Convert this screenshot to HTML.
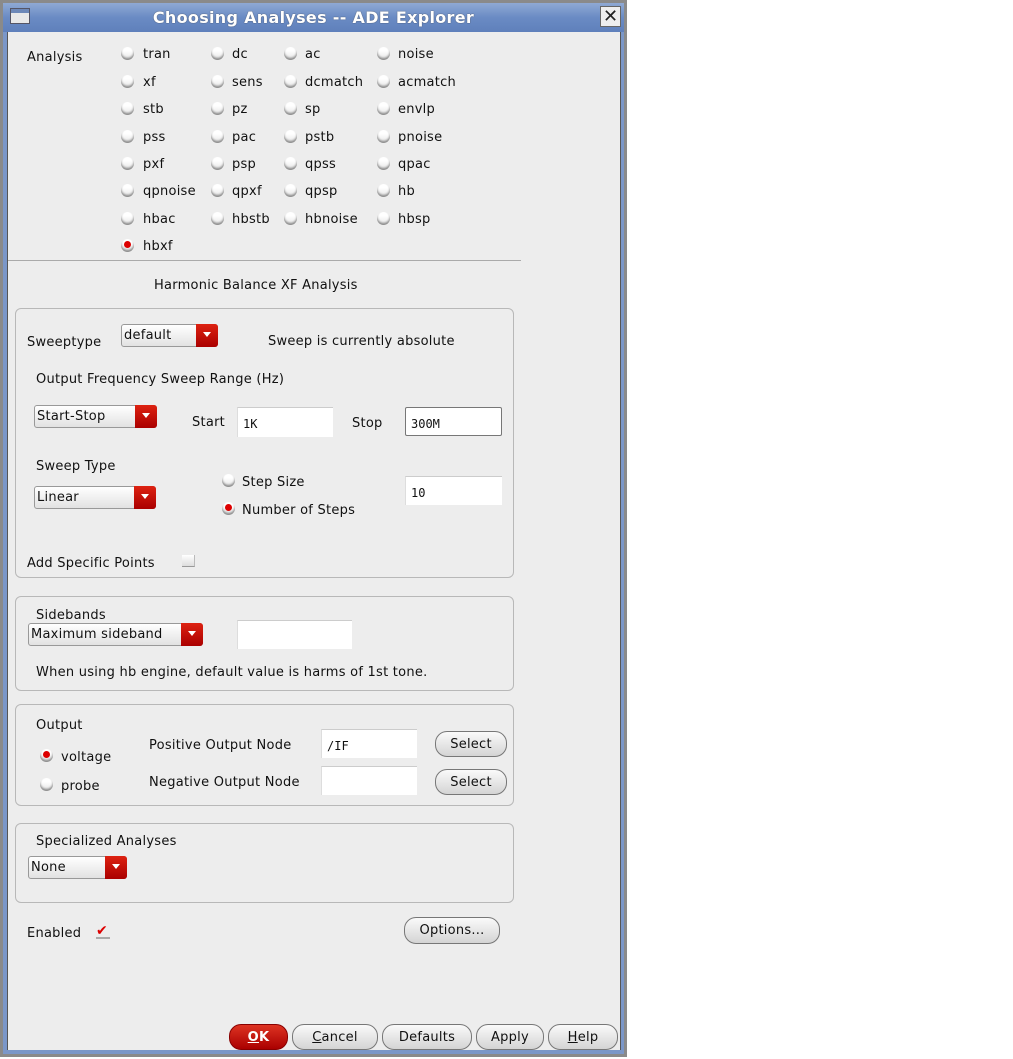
<!DOCTYPE html>
<html><head><meta charset="utf-8"><style>
*{margin:0;padding:0;box-sizing:border-box}
body{width:1013px;height:1059px;background:#fff;position:relative;overflow:hidden;font-family:"DejaVu Sans","Liberation Sans",sans-serif;font-size:13px;color:#111}
.a{position:absolute;white-space:nowrap}
.x{margin-top:2px;letter-spacing:0.25px}
#win{position:absolute;left:0;top:0;width:627px;height:1057px;background:#8a8a8a}
#title{position:absolute;left:3px;top:3px;width:621px;height:29px;background:linear-gradient(#8fa9d4,#6a8bc4 50%,#5f80bb);}
#title .t{position:absolute;left:0;right:0;top:5px;text-align:center;color:#fff;font-weight:bold;font-size:16px;text-shadow:0 0 1px #333;letter-spacing:0.3px}
#frame{position:absolute;left:3px;top:32px;width:621px;height:1022px;background:#7b97c8}
#body{position:absolute;left:7px;top:32px;width:614px;height:1018px;background:#ededed;border-left:1px solid #555;border-right:1px solid #555}
.r{position:absolute;width:13px;height:13px;border-radius:50%;background:linear-gradient(#fff 30%,#e4e4e4);box-shadow:inset 0 -2px 2px #8a8a8a}
.r.on::after{content:"";position:absolute;left:3px;top:2px;width:7px;height:7px;border-radius:50%;background:#d00}
.grp{position:absolute;left:15px;width:499px;border:1px solid #b8b8b8;border-radius:6px}
.dd{position:absolute;height:23px;border:1px solid #999;border-radius:3px;background:linear-gradient(#fff,#e2e2e2);padding:3px 0 0 2px;font-size:13px;letter-spacing:0.25px}
.dd b{position:absolute;right:-1px;top:-1px;width:22px;height:23px;background:linear-gradient(#d21,#a00);border-radius:0 3px 3px 0}
.dd b::after{content:"";position:absolute;left:7px;top:8px;border-left:4px solid transparent;border-right:4px solid transparent;border-top:5px solid #fff}
.tf{position:absolute;background:#fff;border-top:1px solid #ccc;border-left:1px solid #ddd;font-family:"DejaVu Sans Mono","Liberation Mono",monospace;font-size:12px;padding:9px 0 0 5px}
.bt{position:absolute;height:26px;border:1px solid #777;border-radius:12px;background:linear-gradient(#fafafa,#d4d4d4);text-align:center;line-height:26px;font-size:13px;letter-spacing:0.25px}
</style></head><body>
<div id="win"></div>
<div id="title"><div class="a" style="left:7px;top:5px;width:20px;height:16px;background:linear-gradient(#6d88b8 30%,#e8e8e8 30%);border:1px solid #556"></div><div class="t">Choosing Analyses -- ADE Explorer</div>
<div class="a" style="right:3px;top:3px;width:21px;height:21px;background:#eee;border:1px solid #666;font-size:18px;line-height:19px;text-align:center;color:#222">✕</div></div>
<div id="frame"></div>
<div id="body"></div>

<div class="a x" style="left:27px;top:48px">Analysis</div>
<div class="r" style="left:121px;top:47px"></div><div class="a x" style="left:143px;top:45px">tran</div>
<div class="r" style="left:211px;top:47px"></div><div class="a x" style="left:232px;top:45px">dc</div>
<div class="r" style="left:284px;top:47px"></div><div class="a x" style="left:305px;top:45px">ac</div>
<div class="r" style="left:377px;top:47px"></div><div class="a x" style="left:398px;top:45px">noise</div>

<div class="r" style="left:121px;top:75px"></div><div class="a x" style="left:143px;top:73px">xf</div>
<div class="r" style="left:211px;top:75px"></div><div class="a x" style="left:232px;top:73px">sens</div>
<div class="r" style="left:284px;top:75px"></div><div class="a x" style="left:305px;top:73px">dcmatch</div>
<div class="r" style="left:377px;top:75px"></div><div class="a x" style="left:398px;top:73px">acmatch</div>

<div class="r" style="left:121px;top:102px"></div><div class="a x" style="left:143px;top:100px">stb</div>
<div class="r" style="left:211px;top:102px"></div><div class="a x" style="left:232px;top:100px">pz</div>
<div class="r" style="left:284px;top:102px"></div><div class="a x" style="left:305px;top:100px">sp</div>
<div class="r" style="left:377px;top:102px"></div><div class="a x" style="left:398px;top:100px">envlp</div>

<div class="r" style="left:121px;top:130px"></div><div class="a x" style="left:143px;top:128px">pss</div>
<div class="r" style="left:211px;top:130px"></div><div class="a x" style="left:232px;top:128px">pac</div>
<div class="r" style="left:284px;top:130px"></div><div class="a x" style="left:305px;top:128px">pstb</div>
<div class="r" style="left:377px;top:130px"></div><div class="a x" style="left:398px;top:128px">pnoise</div>

<div class="r" style="left:121px;top:157px"></div><div class="a x" style="left:143px;top:155px">pxf</div>
<div class="r" style="left:211px;top:157px"></div><div class="a x" style="left:232px;top:155px">psp</div>
<div class="r" style="left:284px;top:157px"></div><div class="a x" style="left:305px;top:155px">qpss</div>
<div class="r" style="left:377px;top:157px"></div><div class="a x" style="left:398px;top:155px">qpac</div>

<div class="r" style="left:121px;top:184px"></div><div class="a x" style="left:143px;top:182px">qpnoise</div>
<div class="r" style="left:211px;top:184px"></div><div class="a x" style="left:232px;top:182px">qpxf</div>
<div class="r" style="left:284px;top:184px"></div><div class="a x" style="left:305px;top:182px">qpsp</div>
<div class="r" style="left:377px;top:184px"></div><div class="a x" style="left:398px;top:182px">hb</div>

<div class="r" style="left:121px;top:212px"></div><div class="a x" style="left:143px;top:210px">hbac</div>
<div class="r" style="left:211px;top:212px"></div><div class="a x" style="left:232px;top:210px">hbstb</div>
<div class="r" style="left:284px;top:212px"></div><div class="a x" style="left:305px;top:210px">hbnoise</div>
<div class="r" style="left:377px;top:212px"></div><div class="a x" style="left:398px;top:210px">hbsp</div>

<div class="r on" style="left:121px;top:239px"></div><div class="a x" style="left:143px;top:237px">hbxf</div>

<div class="a" style="left:8px;top:260px;width:513px;height:1px;background:#aaa"></div>
<div class="a x" style="left:154px;top:276px">Harmonic Balance XF Analysis</div>

<div class="grp" style="top:308px;height:270px"></div>
<div class="a x" style="left:27px;top:333px">Sweeptype</div>
<div class="dd" style="left:121px;top:324px;width:97px">default<b></b></div>
<div class="a x" style="left:268px;top:332px">Sweep is currently absolute</div>
<div class="a x" style="left:36px;top:370px">Output Frequency Sweep Range (Hz)</div>
<div class="dd" style="left:34px;top:405px;width:123px">Start-Stop<b></b></div>
<div class="a x" style="left:192px;top:413px">Start</div>
<div class="tf" style="left:237px;top:407px;width:96px;height:30px">1K</div>
<div class="a x" style="left:352px;top:414px">Stop</div>
<div class="tf" style="left:405px;top:407px;width:97px;height:29px;border:1px solid #777;border-radius:2px">300M</div>
<div class="a x" style="left:36px;top:457px">Sweep Type</div>
<div class="dd" style="left:34px;top:486px;width:122px">Linear<b></b></div>
<div class="r" style="left:222px;top:474px"></div><div class="a x" style="left:242px;top:473px">Step Size</div>
<div class="r on" style="left:222px;top:502px"></div><div class="a x" style="left:242px;top:501px">Number of Steps</div>
<div class="tf" style="left:405px;top:476px;width:97px;height:29px">10</div>
<div class="a x" style="left:27px;top:554px">Add Specific Points</div>
<div class="a" style="left:182px;top:555px;width:13px;height:12px;background:linear-gradient(#fff,#ddd);border-bottom:1px solid #999;border-right:1px solid #bbb"></div>

<div class="grp" style="top:596px;height:95px"></div>
<div class="a x" style="left:36px;top:606px">Sidebands</div>
<div class="dd" style="left:28px;top:623px;width:175px">Maximum sideband<b></b></div>
<div class="tf" style="left:237px;top:620px;width:115px;height:29px"></div>
<div class="a x" style="left:36px;top:663px">When using hb engine, default value is harms of 1st tone.</div>

<div class="grp" style="top:704px;height:102px"></div>
<div class="a x" style="left:36px;top:716px">Output</div>
<div class="r on" style="left:40px;top:749px"></div><div class="a x" style="left:61px;top:748px">voltage</div>
<div class="r" style="left:40px;top:778px"></div><div class="a x" style="left:61px;top:777px">probe</div>
<div class="a x" style="left:149px;top:736px">Positive Output Node</div>
<div class="a x" style="left:149px;top:773px">Negative Output Node</div>
<div class="tf" style="left:321px;top:729px;width:96px;height:29px">/IF</div>
<div class="tf" style="left:321px;top:766px;width:96px;height:29px"></div>
<div class="bt" style="left:435px;top:731px;width:72px">Select</div>
<div class="bt" style="left:435px;top:769px;width:72px">Select</div>

<div class="grp" style="top:823px;height:80px"></div>
<div class="a x" style="left:36px;top:832px">Specialized Analyses</div>
<div class="dd" style="left:28px;top:856px;width:99px">None<b></b></div>

<div class="a x" style="left:27px;top:924px">Enabled</div>
<div class="a" style="left:96px;top:925px;width:14px;height:14px;border-bottom:2px solid #aaa;color:#d00;font-size:14px;line-height:12px;font-weight:bold">✔</div>
<div class="bt" style="left:404px;top:917px;width:96px;height:27px">Options...</div>

<div class="bt" style="left:229px;top:1024px;width:59px;background:linear-gradient(#d32,#a00);color:#fff;font-weight:bold;border-color:#800"><u>O</u>K</div>
<div class="bt" style="left:292px;top:1024px;width:86px"><u>C</u>ancel</div>
<div class="bt" style="left:382px;top:1024px;width:90px">Defaults</div>
<div class="bt" style="left:476px;top:1024px;width:68px">Apply</div>
<div class="bt" style="left:548px;top:1024px;width:70px"><u>H</u>elp</div>
</body></html>
